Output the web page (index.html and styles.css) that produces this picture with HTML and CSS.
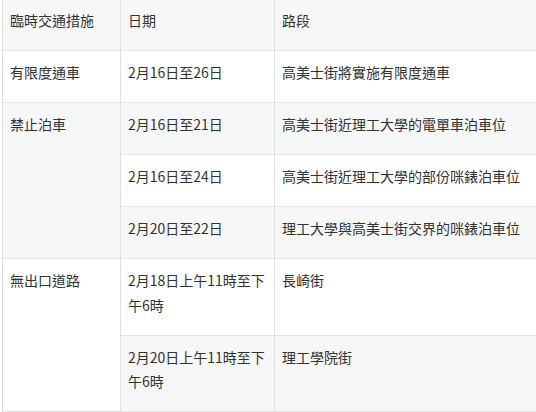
FILE: index.html
```html
<!DOCTYPE html>
<html lang="zh-Hant">
<head>
<meta charset="utf-8">
<link rel="stylesheet" href="styles.css">
</head>
<body>
<table class="measures">
  <colgroup>
    <col class="c1">
    <col class="c2">
    <col class="c3">
  </colgroup>
  <thead>
    <tr class="alt">
      <th>臨時交通措施</th>
      <th>日期</th>
      <th>路段</th>
    </tr>
  </thead>
  <tbody>
    <tr>
      <td>有限度通車</td>
      <td>2月16日至26日</td>
      <td>高美士街將實施有限度通車</td>
    </tr>
    <tr class="alt">
      <td rowspan="3">禁止泊車</td>
      <td>2月16日至21日</td>
      <td>高美士街近理工大學的電單車泊車位</td>
    </tr>
    <tr>
      <td>2月16日至24日</td>
      <td>高美士街近理工大學的部份咪錶泊車位</td>
    </tr>
    <tr class="alt">
      <td>2月20日至22日</td>
      <td>理工大學與高美士街交界的咪錶泊車位</td>
    </tr>
    <tr>
      <td rowspan="2">無出口道路</td>
      <td>2月18日上午11時至下午6時</td>
      <td>長崎街</td>
    </tr>
    <tr class="alt">
      <td>2月20日上午11時至下午6時</td>
      <td>理工學院街</td>
    </tr>
  </tbody>
</table>
</body>
</html>
```

FILE: styles.css
```css
html, body {
  margin: 0;
  padding: 0;
  background: #ffffff;
  overflow: hidden;
}

.measures {
  margin: -1px 0 0 2px;
  width: 534px;
  border-collapse: separate;
  border-spacing: 0;
  table-layout: fixed;
  border-left: 1px solid #dcdede;
  font-family: "Noto Sans CJK TC", "Noto Sans", sans-serif;
  font-size: 14px;
  line-height: 24.5px;
  color: #333333;
}

.c1 { width: 118px; }
.c2 { width: 154px; }
.c3 { width: auto; }

.measures th,
.measures td {
  padding: 9px 7px 17.5px 7px;
  text-align: left;
  vertical-align: top;
  font-weight: normal;
  border-right: 1px solid #dfe1e1;
  border-bottom: 1px solid #e3e5e5;
  background: #ffffff;
}

.measures th:last-child,
.measures td:last-child {
  border-right: none;
}

.measures tr.alt th,
.measures tr.alt td {
  background: #f6f7f7;
}
```
